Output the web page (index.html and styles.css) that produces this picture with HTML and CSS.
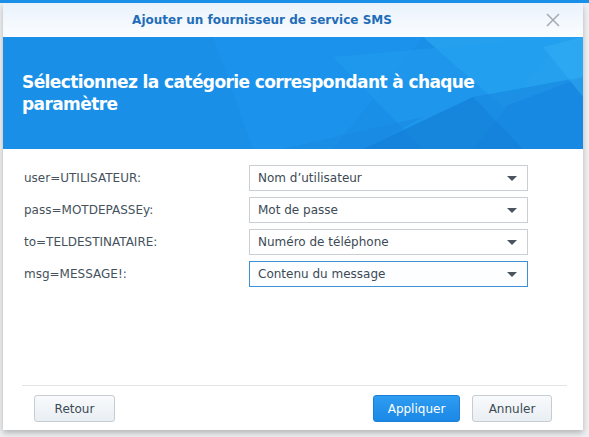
FILE: index.html
```html
<html>
  <head>
    <meta charset="utf-8" />
    <title>Ajouter un fournisseur de service SMS</title>
    <link rel="stylesheet" href="styles.css">
  </head>
  <body>
    <div class="dialog">
      <!-- barre de titre -->
      <div class="titlebar">
        <span class="title">Ajouter un fournisseur de service SMS</span>
        <span class="close">
          <svg width="14" height="14" viewBox="0 0 14 14">
            <path d="M1 1 L13 13 M13 1 L1 13" stroke="#a3abb2" stroke-width="1.5" fill="none" />
          </svg>
        </span>
      </div>

      <!-- bandeau bleu -->
      <div class="banner">
        <svg class="facets" width="580" height="112" viewBox="0 0 580 112" preserveAspectRatio="none">
          <polygon points="210,0 420,0 330,112 250,112" fill="#1c95ec" opacity="0.6" />
          <polygon points="420,0 580,0 580,40 500,70" fill="#2aa6f2" opacity="0.7" />
          <polygon points="330,20 560,0 470,112 420,112" fill="#22a0ef" opacity="0.45" />
          <polygon points="360,112 470,60 520,112" fill="#147dd6" opacity="0.7" />
          <polygon points="470,60 580,40 580,112 520,112" fill="#1785dd" opacity="0.6" />
          <polygon points="540,10 580,0 580,60" fill="#33aef4" opacity="0.5" />
          <polygon points="280,112 360,112 420,80" fill="#1a88e0" opacity="0.5" />
        </svg>
        <h1>Sélectionnez la catégorie correspondant à chaque paramètre</h1>
      </div>

      <!-- formulaire -->
      <div class="form">
        <div class="row">
          <label>user=UTILISATEUR:</label>
          <div class="select"><span>Nom d’utilisateur</span><i class="caret"></i></div>
        </div>
        <div class="row">
          <label>pass=MOTDEPASSEy:</label>
          <div class="select"><span>Mot de passe</span><i class="caret"></i></div>
        </div>
        <div class="row">
          <label>to=TELDESTINATAIRE:</label>
          <div class="select"><span>Numéro de téléphone</span><i class="caret"></i></div>
        </div>
        <div class="row">
          <label>msg=MESSAGE!:</label>
          <div class="select focus"><span>Contenu du message</span><i class="caret"></i></div>
        </div>
      </div>

      <!-- boutons -->
      <div class="footer">
        <button class="btn back">Retour</button>
        <div class="spacer"></div>
        <button class="btn primary">Appliquer</button>
        <button class="btn cancel">Annuler</button>
      </div>
    </div>
  </body>
</html>
```

FILE: styles.css
```css
/* page */
body {
  margin: 0;
  padding: 0 5px 0 3px;
  background-color: #eef0f2;
  border-top: 3px solid #1a8fe8;
  font-family: "DejaVu Sans", Verdana, sans-serif;
  font-size: 12px;
  color: #3c4a55;
}

/* 1. la fenetre */
.dialog {
  width: 580px;
  height: 427px;
  display: flex;
  flex-direction: column;
  background-color: #fff;
  box-shadow: 0 3px 6px rgba(0, 0, 0, 0.25);
}

/* 2. barre de titre */
.titlebar {
  position: relative;
  height: 34px;
  display: flex;
  justify-content: center;
  align-items: center;
  padding-right: 62px;
  background: linear-gradient(#e9f2fb, #fbfdff);
}
.title {
  font-size: 12px;
  font-weight: bold;
  color: #1f6db8;
}
.close {
  position: absolute;
  right: 23px;
  top: 10px;
  width: 14px;
  height: 14px;
}

/* 3. bandeau */
.banner {
  position: relative;
  height: 112px;
  display: flex;
  align-items: center;
  padding: 0 10px 0 19px;
  background-color: #1a8fe8;
  overflow: hidden;
}
.facets {
  position: absolute;
  left: 0;
  top: 0;
}
.banner h1 {
  position: relative;
  margin: 0;
  font-size: 17px;
  letter-spacing: -0.6px;
  line-height: 22px;
  font-weight: bold;
  color: #fff;
}

/* 4. formulaire */
.form {
  flex: 1;
  display: flex;
  flex-direction: column;
  gap: 6px;
  padding: 16px 0 0 21px;
}
.row {
  display: flex;
  align-items: center;
  height: 26px;
}
.row label {
  width: 225px;
  color: #45525c;
}
.select {
  width: 269px;
  height: 24px;
  display: flex;
  align-items: center;
  justify-content: space-between;
  padding: 0 0 0 8px;
  border: 1px solid #c9cfd4;
  color: #3c4a55;
  box-sizing: content-box;
}
.select.focus {
  border-color: #3d8fd6;
  background-color: #fcfeff;
}
.caret {
  width: 0;
  height: 0;
  margin-right: 10px;
  border-left: 5px solid transparent;
  border-right: 5px solid transparent;
  border-top: 5px solid #4b545c;
}

/* 5. boutons */
.footer {
  display: flex;
  align-items: center;
  margin: 0 16px 0 19px;
  padding: 9px 15px 8px 12px;
  border-top: 1px solid #e1e4e7;
}
.spacer {
  flex: 1;
}
.btn {
  height: 27px;
  font-family: "DejaVu Sans", Verdana, sans-serif;
  font-size: 12px;
  color: #3c4a55;
  border: 1px solid #c6ccd2;
  border-radius: 3px;
  background: linear-gradient(#f8fafc, #e9eef3);
}
.back {
  width: 81px;
}
.cancel {
  width: 80px;
  margin-left: 12px;
}
.primary {
  width: 87px;
  color: #fff;
  border-color: #1c7fd6;
  background: linear-gradient(#2e9cf0, #1a88e6);
}
```
